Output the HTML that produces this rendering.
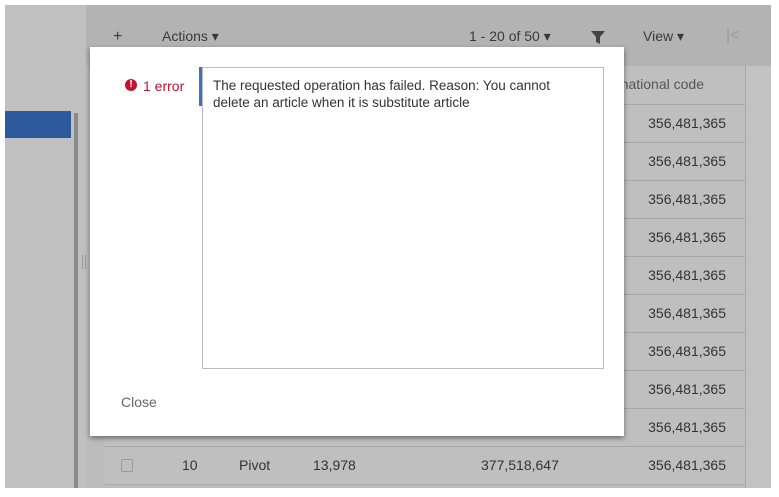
<!DOCTYPE html>
<html><head><style>
body{margin:0;width:779px;height:497px;background:#fff;position:relative;overflow:hidden;font-family:"Liberation Sans",sans-serif;}
.a{position:absolute}
.bg{left:5px;top:5px;width:766px;height:483px;background:#c0c0c0}
.tb{left:86px;top:5px;width:685px;height:61px;background:#b3b3b3}
.t{color:#3a3a3a;font-size:14px}
.row{left:105px;width:641px;height:37px;border-top:1px solid #a8a8a8;background:#bfbfbf}
.num{right:20px;font-size:14px;color:#333;top:10px}
</style></head><body>
<div class="a bg"></div>
<div class="a" style="left:86px;top:5px;width:685px;height:483px;background:#bcbcbc"></div>
<div class="a tb"></div>
<div class="a" style="left:746px;top:66px;width:25px;height:422px;background:#c2c2c2"></div>
<div class="a" style="left:5px;top:111px;width:66px;height:27px;background:#2d5a9c"></div>
<div class="a" style="left:74px;top:113px;width:4px;height:375px;background:#8a8a8a"></div>
<div class="a" style="left:82px;top:255px;width:1px;height:14px;background:#999"></div>
<div class="a" style="left:85px;top:255px;width:1px;height:14px;background:#999"></div>
<div class="a t" style="left:113px;top:28px;font-size:16px">+</div>
<div class="a t" style="left:162px;top:28px">Actions ▾</div>
<div class="a t" style="left:469px;top:28px">1 - 20 of 50 ▾</div>
<svg class="a" style="left:591px;top:30px" width="14" height="14"><path d="M0 1h14l-5 6v7l-4-2V7z" fill="#444"/></svg>
<div class="a t" style="left:643px;top:28px">View ▾</div>
<div class="a" style="left:726px;top:27px;color:#9a9a9a;font-size:16px">|&lt;</div>
<div class="a row" style="top:66px;height:38px;border:0"><span class="a num" style="color:#555;right:42px">national code</span></div>
<div class="a row" style="top:104px"><span class="a num">356,481,365</span></div>
<div class="a row" style="top:142px"><span class="a num">356,481,365</span></div>
<div class="a row" style="top:180px"><span class="a num">356,481,365</span></div>
<div class="a row" style="top:218px"><span class="a num">356,481,365</span></div>
<div class="a row" style="top:256px"><span class="a num">356,481,365</span></div>
<div class="a row" style="top:294px"><span class="a num">356,481,365</span></div>
<div class="a row" style="top:332px"><span class="a num">356,481,365</span></div>
<div class="a row" style="top:370px"><span class="a num">356,481,365</span></div>
<div class="a row" style="top:408px"><span class="a num">356,481,365</span></div>
<div class="a row" style="top:446px"><span class="a" style="left:16px;top:12px;width:10px;height:11px;border:1px solid #999;border-radius:2px"></span><span class="a num" style="left:77px">10</span><span class="a num" style="left:134px">Pivot</span><span class="a num" style="left:208px">13,978</span><span class="a num" style="left:376px">377,518,647</span><span class="a num">356,481,365</span></div>
<div class="a" style="left:105px;top:484px;width:641px;height:1px;background:#a8a8a8"></div>
<div class="a" style="left:745px;top:66px;width:1px;height:422px;background:#a8a8a8"></div>
<div class="a" style="left:90px;top:47px;width:534px;height:389px;background:#fff;box-shadow:0 2px 5px rgba(0,0,0,.45)"></div>
<div class="a" style="left:125px;top:79px;width:12px;height:12px;border-radius:50%;background:#c8102e;color:#fff;font-size:10px;font-weight:bold;text-align:center;line-height:12px">!</div>
<div class="a" style="left:143px;top:78px;color:#c8102e;font-size:14px">1 error</div>
<div class="a" style="left:202px;top:67px;width:400px;height:300px;border:1px solid #bbb"></div>
<div class="a" style="left:199px;top:67px;width:3px;height:39px;background:#3a73c4"></div>
<div class="a" style="left:213px;top:77px;width:350px;font-size:13.5px;line-height:17px;color:#333">The requested operation has failed. Reason: You cannot delete an article when it is substitute article</div>
<div class="a" style="left:121px;top:394px;font-size:14px;color:#666">Close</div>
</body></html>
